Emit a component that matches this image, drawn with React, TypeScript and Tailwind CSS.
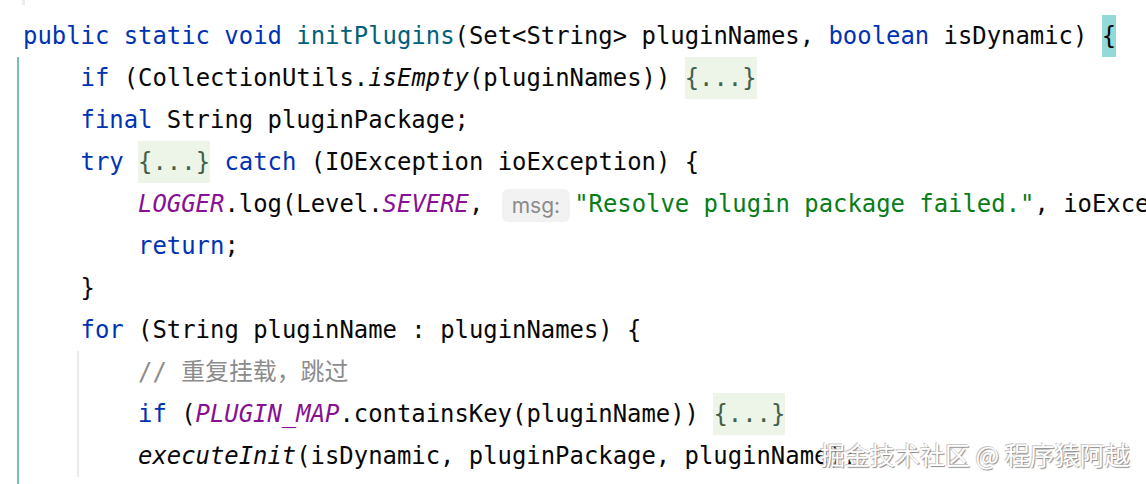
import React from "react";

const Kw = ({ children }: { children: React.ReactNode }) => (
  <span className="text-[#0033b3]">{children}</span>
);

const Field = ({ children }: { children: React.ReactNode }) => (
  <span className="italic text-[#871094]">{children}</span>
);

const Fold = () => (
  <span className="inline-block align-top h-[42px] bg-[#ecf5e7] text-[#44604a]">{"{...}"}</span>
);

const Line = ({ children }: { children?: React.ReactNode }) => (
  <div className="h-[42px] leading-[42px] whitespace-pre">{children}</div>
);

export default function App() {
  return (
    <div
      className="relative w-[1146px] h-[484px] overflow-hidden bg-white text-[#080808] text-[23.9px]"
      style={{ fontFamily: '"DejaVu Sans Mono", "Noto Sans CJK SC", monospace' }}
    >
      <div className="ml-[22px] h-[5px] w-[3px] bg-[#ececec]" />
      <div className="pt-[10px] pl-[23px]">
        <Line>
          <Kw>public static void </Kw>
          <span className="text-[#00627a]">initPlugins</span>
          {"(Set<String> pluginNames, "}
          <Kw>boolean</Kw>
          {" isDynamic) "}
          <span className="inline-block align-top h-[42px] bg-[#93d9d8]">{"{"}</span>
        </Line>
      </div>
      <div className="ml-[17px] border-l-2 border-[#7cbcbb] pl-[4px] pb-[7px]">
        <Line>
          {"    "}
          <Kw>if</Kw>
          {" (CollectionUtils."}
          <span className="italic">isEmpty</span>
          {"(pluginNames)) "}
          <Fold />
        </Line>
        <Line>
          {"    "}
          <Kw>final</Kw>
          {" String pluginPackage;"}
        </Line>
        <Line>
          {"    "}
          <Kw>try</Kw> <Fold /> <Kw>catch</Kw>
          {" (IOException ioException) {"}
        </Line>
        <Line>
          {"        "}
          <Field>LOGGER</Field>
          {".log(Level."}
          <Field>SEVERE</Field>
          {", "}
          <span
            className="inline-block align-middle ml-[4px] mr-[4px] h-[33px] leading-[33px] px-[10px] rounded-[6px] bg-[#f2f2f2] text-[#8a8a8a] text-[21px]"
            style={{ fontFamily: "Inter, sans-serif" }}
          >
            msg:
          </span>
          <span className="text-[#067d17]">"Resolve plugin package failed."</span>
          {", ioException);"}
        </Line>
        <Line>
          {"        "}
          <Kw>return</Kw>
          {";"}
        </Line>
        <Line>{"    }"}</Line>
        <Line>
          {"    "}
          <Kw>for</Kw>
          {" (String pluginName : pluginNames) {"}
        </Line>
        <div className="ml-[54px] border-l-2 border-[#ebebeb] pl-[59px]">
          <Line>
            <span className="text-[#8c8c8c]">// 重复挂载，跳过</span>
          </Line>
          <Line>
            <Kw>if</Kw>
            {" ("}
            <Field>PLUGIN_MAP</Field>
            {".containsKey(pluginName)) "}
            <Fold />
          </Line>
          <Line>
            <span className="italic">executeInit</span>
            {"(isDynamic, pluginPackage, pluginName);"}
          </Line>
        </div>
      </div>
      <div
        className="absolute left-[820px] top-[436px] text-[25px] leading-[36px] text-white whitespace-pre [text-shadow:1px_1px_1px_#8a8a8a,-1px_-1px_0_#c8c8c8]"
        style={{ fontFamily: '"Noto Sans CJK SC", sans-serif' }}
      >
        掘金技术社区 @ 程序猿阿越
      </div>
    </div>
  );
}
